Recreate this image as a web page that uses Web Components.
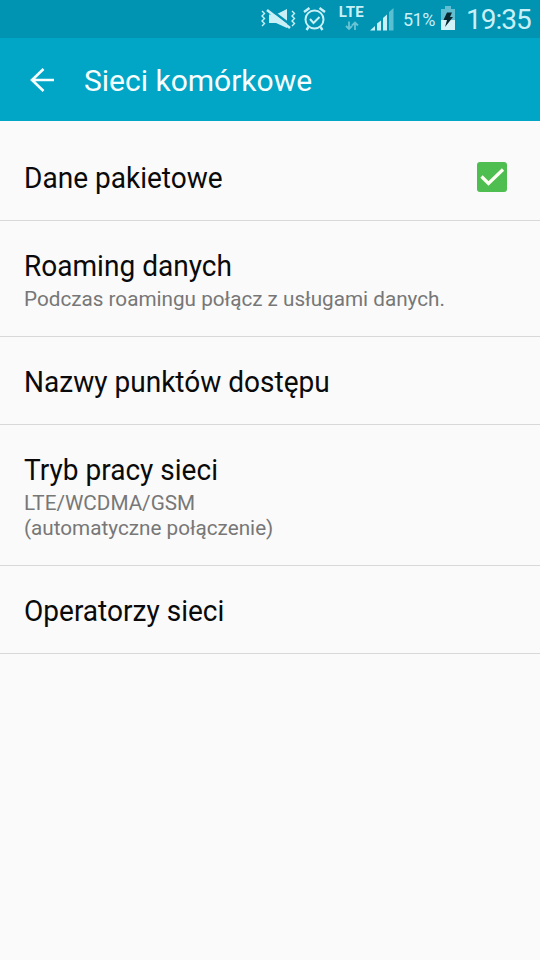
<!DOCTYPE html>
<html lang="pl">
<head>
<meta charset="utf-8">
<title>Sieci komórkowe</title>
<style>
html, body { margin: 0; height: 100%; background: #fafafa; }
body { font-family: Roboto, "Noto Sans", sans-serif; overflow: hidden; }
</style>
</head>
<body>
<settings-screen></settings-screen>
<script>
const define = (name, html) => {
  const template = document.createElement('template');
  template.innerHTML = html;
  customElements.define(name, class extends HTMLElement {
    constructor() {
      super();
      this.attachShadow({ mode: 'open' }).append(template.content.cloneNode(true));
    }
  });
};

define('status-bar', `
<style>
:host { display: flex; height: 38px; box-sizing: border-box; background: #0093b2; color: #c9f0f7; justify-content: flex-end; align-items: flex-start; padding-right: 8px; }
svg { display: block; flex: none; }
.net { width: 27px; margin: 5px 5px 0 11px; display: flex; flex-direction: column; align-items: center; font-weight: 700; font-size: 15px; line-height: 15px; letter-spacing: .4px; }
.net svg { margin-top: 1px; }
.pct { margin: 10px 5px 0 8px; font-size: 18px; line-height: 20px; width: 32px; white-space: nowrap; letter-spacing: -.5px; }
.time { margin: 3px 0 0 10px; width: 66px; font-size: 28px; line-height: 34px; font-weight: 400; white-space: nowrap; letter-spacing: -1px; }
</style>
<svg width="36" height="38" viewBox="0 0 36 38" fill="none" stroke="currentColor">
  <path d="M9 14.500h7L27 9v19l-11-5H9z" fill="currentColor" stroke="none"/>
  <path d="M9 8.500L32 26" stroke="#0093b2" stroke-width="2.400"/>
  <path d="M7 10l23 18" stroke-width="2.600"/>
  <path d="M2 11l2.500 2.500L2 16l2.500 2.500L2 21l2.500 2.500L2 26M32 11l2.500 2.500-2.500 2.500 2.500 2.500-2.500 2.500 2.500 2.500-2.500 2.500" stroke-width="1.400"/>
</svg>
<svg style="margin-left:6px" width="25" height="38" viewBox="0 0 25 38" fill="none" stroke="currentColor" stroke-width="2">
  <circle cx="12.500" cy="19.500" r="9"/>
  <path d="M8 19l3.500 4 6-6"/>
  <path d="M2 12l5.500-4M23 12L17.500 8M6.500 27l-2 3M18.500 27l2 3" stroke-width="2.400"/>
</svg>
<div class="net"><span>LTE</span>
<svg width="14" height="10" viewBox="0 0 14 10" fill="none" stroke="#69c4d5" stroke-width="1.800"><path d="M4 .5v7M1 5l3 3 3-3M10 9V2M7 4.500l3-3 3 3"/></svg></div>
<svg width="25" height="38" viewBox="0 0 25 38" fill="currentColor">
  <path d="M0 30.500l5-4.500v4.500zM7 30.500v-7l4-3v10zM13 30.500V18l4-3.500v16z"/>
  <path d="M19 30.500V12l4.500-4v22.500z" fill="#5bbfd2"/>
</svg>
<div class="pct">51%</div>
<svg width="16" height="38" viewBox="0 0 16 38">
  <path d="M5 6h6v3h4v11H1V9h4z" fill="#62bfd1"/>
  <path d="M1 20h14v10H1z" fill="#d3f3f8"/>
  <path d="M7 12.500h5l-2 4.500h3L5 27l2-7H3.500z" fill="#09252e"/>
</svg>
<div class="time">19:35</div>
`);

define('app-bar', `
<style>
:host { display: flex; height: 83px; align-items: center; background: #01a5c6; color: #f7ffff; padding: 0 30px; font-size: 30px; line-height: 40px; white-space: nowrap; }
svg { display: block; margin-right: 30px; flex: none; }
span { padding-top: 2px; }
</style>
<svg width="24" height="24" viewBox="0 0 24 24" fill="none" stroke="currentColor" stroke-width="2.600"><path d="M24 12H2M13.500 1L2 12l11.500 11"/></svg>
<span><slot></slot></span>
`);

define('check-box', `
<style>:host { display: block; width: 30px; height: 30px; border-radius: 3px; background: #4ebe51; }</style>
<svg width="30" height="30" viewBox="0 0 30 30" fill="none" stroke="#fffff4" stroke-width="3.200"><path d="M4.500 14.500l7 7L26 7.500"/></svg>
`);

define('setting-row', `
<style>
:host { display: flex; box-sizing: border-box; min-height: 88px; justify-content: space-between; align-items: flex-start; padding: 28px 33px 24px 24px; border-bottom: 1px solid #d8d8d8; color: #0a0a0a; font-size: 29px; line-height: 34px; white-space: nowrap; }
.title { transform: scaleX(.967); transform-origin: 0 50%; }
.summary { font-size: 21px; line-height: 25px; color: #777; transform: scaleX(.985); transform-origin: 0 50%; }
::slotted([slot=summary]) { display: block; height: 25px; }
::slotted([slot=summary]:first-of-type) { margin-top: 4px; }
::slotted([slot=control]) { margin-top: 1px; }
</style>
<div><div class="title"><slot></slot></div><div class="summary"><slot name="summary"></slot></div></div>
<slot name="control"></slot>
`);

define('settings-screen', `
<style>
:host { display: flex; flex-direction: column; height: 100vh; background: #fafafa; }
main { display: flex; flex-direction: column; padding-top: 12px; }
span { display: inline-block; }
</style>
<status-bar></status-bar>
<app-bar>Sieci komórkowe</app-bar>
<main>
  <setting-row><span>Dane pakietowe</span><check-box slot="control"></check-box></setting-row>
  <setting-row><span>Roaming danych</span><div slot="summary">Podczas roamingu połącz z usługami danych.</div></setting-row>
  <setting-row><span>Nazwy punktów dostępu</span></setting-row>
  <setting-row><span>Tryb pracy sieci</span><div slot="summary">LTE/WCDMA/GSM</div><div slot="summary">(automatyczne połączenie)</div></setting-row>
  <setting-row><span>Operatorzy sieci</span></setting-row>
</main>
`);
</script>
</body>
</html>
